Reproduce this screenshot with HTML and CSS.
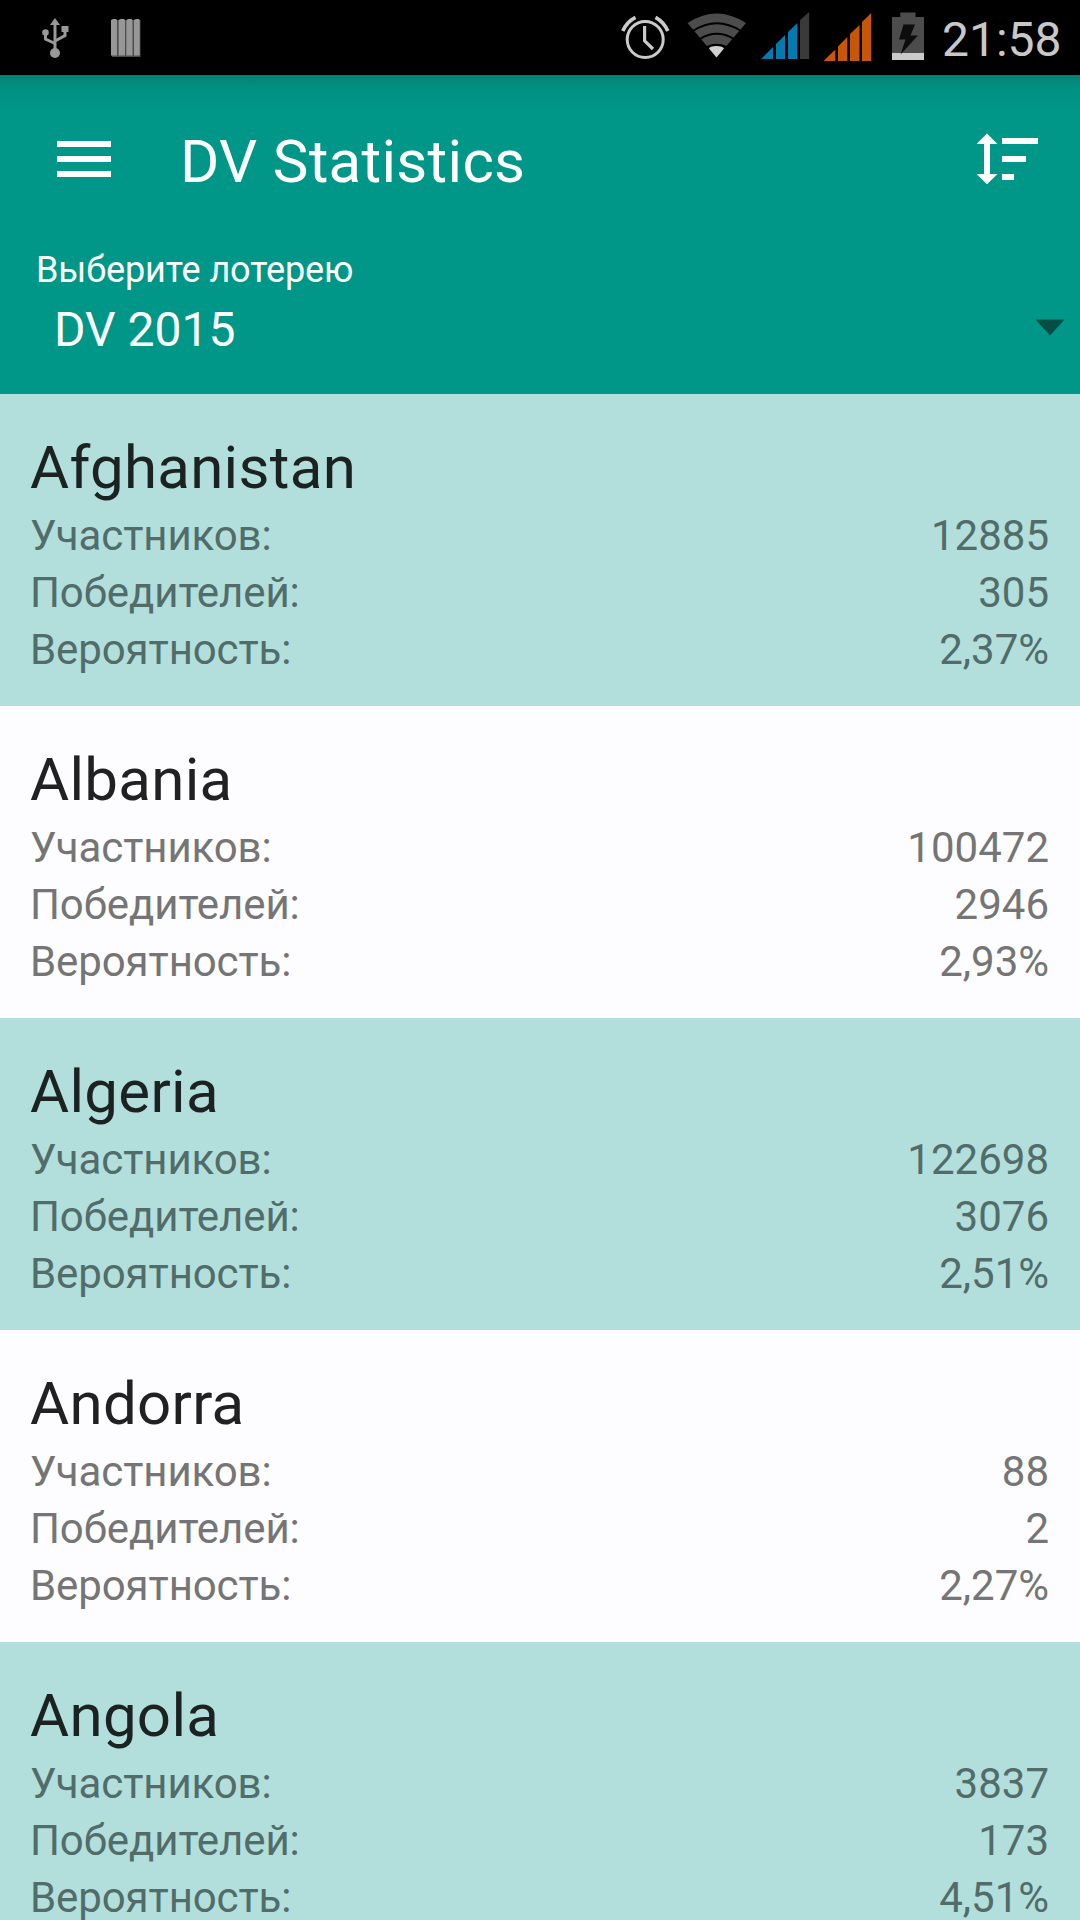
FILE: index.html
```html
<!DOCTYPE html>
<html lang="ru">
<head>
  <meta charset="utf-8">
  <title>DV Statistics</title>
  <link rel="stylesheet" href="styles.css">
</head>
<body>
  <div class="status">
    <svg class="usb" width="30" height="75" viewBox="40 0 30 75">
      <g fill="none" stroke="#999" stroke-width="3">
        <path d="M55 24V50"/>
        <path d="M45.5 33V39L55 43.500"/>
        <path d="M65 30V35.500L55 41"/>
      </g>
      <g fill="#999">
        <path d="M55 18L60 25H50Z"/>
        <circle cx="45.500" cy="32.500" r="3.300"/>
        <path d="M61.500 26H68.500V32H61.500Z"/>
        <circle cx="55" cy="53" r="5"/>
      </g>
    </svg>
    <svg class="bars" width="30" height="75" viewBox="111 0 30 75">
      <path fill="#4c4c4c" d="M112 20H140.500V57H112Z"/>
      <path fill="#979797" d="M111 20L113 19H116L117 20V55.500H111ZM118.600 20L120.600 19H124L125 20V55.500H118.600ZM126.300 20L128.300 19H131.500L132.500 20V55.500H126.300ZM134 20L136 19H139L139.700 20V55.500H134Z"/>
    </svg>
    <div class="space"></div>
    <svg class="alarm" width="50" height="75" viewBox="620 0 50 75">
      <g fill="none" stroke="#cacaca">
        <circle cx="645.200" cy="39.500" r="18" stroke-width="3"/>
        <path stroke-width="3.200" d="M644.600 26V40.800L653 49"/>
        <path stroke-width="3.600" d="M622.800 31Q626.500 22 635.500 17.300M667.800 31Q664 22 655.500 17.300"/>
      </g>
    </svg>
    <svg class="wifi" width="60" height="75" viewBox="687 0 60 75">
      <path fill="#4c4c4c" d="M716.500 57.500L687.500 23Q716.500 4 746 23Z"/>
      <g fill="none" stroke="#000" stroke-width="2">
        <path d="M693 31Q716.500 15.500 741 31"/>
        <path d="M700 39Q716.500 28.500 734 39"/>
      </g>
      <path fill="#000" d="M716.500 57.500L706.500 46Q716.500 41.500 727 46Z"/>
      <path fill="#d0d0d0" d="M716.500 57.500L709 48.500Q709.500 46 716.500 46Q723 46 724 48.500Z"/>
    </svg>
    <svg class="signal" width="50" height="75" viewBox="760 0 50 75">
      <path fill="#0679ae" d="M761 59L773 47V59ZM776 44L785 35V59H776ZM788 32L797.300 23V59H788Z"/>
      <path fill="#3a3a3a" d="M800 20L809.200 12V59H800Z"/>
    </svg>
    <svg class="signal2" width="50" height="75" viewBox="823 0 50 75">
      <path fill="#c65708" d="M823.500 61L835.300 49.500V61ZM838 46.500L847.300 37V61H838ZM850 34L859.500 25V61H850ZM862 22L871.200 13V61H862Z"/>
    </svg>
    <svg class="battery" width="33" height="75" viewBox="892 0 33 75">
      <path fill="#4c4c4c" d="M892 17H900.300V12.500H915.500V17H924V53H892Z"/>
      <path fill="#cacaca" d="M892 53H924V60H892Z"/>
      <path fill="#0d0d0d" d="M903.500 24.500H915L910.500 35.500H918L900.500 54.500L905.500 39.500H899Z"/>
    </svg>
    <div class="time">21:58</div>
  </div>

  <div class="header">
    <div class="toolbar">
      <svg class="menu" width="54" height="54" viewBox="0 0 54 54">
        <path fill="#fff" d="M0 9H54V15H0ZM0 24H54V30H0ZM0 39H54V45H0Z"/>
      </svg>
      <h1>DV Statistics</h1>
      <svg class="sort" width="62" height="52" viewBox="977 133 62 52">
        <path fill="#fff" d="M987 133.500L997.500 144H990V174H997.500L987 184.300L976.500 174H984V144H976.500ZM1002 138H1038V144H1002ZM1002 156H1026V162H1002ZM1002 174H1014V180H1002Z"/>
      </svg>
    </div>
    <div class="label">Выберите лотерею</div>
    <div class="spinner">
      <span>DV 2015</span>
      <svg width="30" height="17" viewBox="0 0 30 17"><path fill="#034f46" d="M0.500 0.500H29.500L15 16.500Z"/></svg>
    </div>
  </div>

  <ul class="list">
    <li>
      <h2>Afghanistan</h2>
      <p><span>Участников:</span><span>12885</span></p>
      <p><span>Победителей:</span><span>305</span></p>
      <p><span>Вероятность:</span><span>2,37%</span></p>
    </li>
    <li>
      <h2>Albania</h2>
      <p><span>Участников:</span><span>100472</span></p>
      <p><span>Победителей:</span><span>2946</span></p>
      <p><span>Вероятность:</span><span>2,93%</span></p>
    </li>
    <li>
      <h2>Algeria</h2>
      <p><span>Участников:</span><span>122698</span></p>
      <p><span>Победителей:</span><span>3076</span></p>
      <p><span>Вероятность:</span><span>2,51%</span></p>
    </li>
    <li>
      <h2>Andorra</h2>
      <p><span>Участников:</span><span>88</span></p>
      <p><span>Победителей:</span><span>2</span></p>
      <p><span>Вероятность:</span><span>2,27%</span></p>
    </li>
    <li>
      <h2>Angola</h2>
      <p><span>Участников:</span><span>3837</span></p>
      <p><span>Победителей:</span><span>173</span></p>
      <p><span>Вероятность:</span><span>4,51%</span></p>
    </li>
  </ul>
</body>
</html>
```
FILE: styles.css
```css
*{margin: 0;padding: 0;box-sizing: border-box;}
ul{list-style: none;}
html, body{
  width: 1080px;
  height: 1920px;
  overflow: hidden;
}
body{
  background-color: #fdfdff;
  font-family: Roboto, "Noto Sans", sans-serif;
}
svg{
  display: block;
  flex-shrink: 0;
}
h1, h2{
  font-size: 60px;
  font-weight: 400;
  line-height: 71px;
  letter-spacing: 0.3px;
}

/* status bar */
.status{
  display: flex;
  height: 75px;
  padding: 0 18px 0 40px;
  background-color: #000;
}
.bars{
  margin-left: 41px;
}
.space{
  flex: 1;
}
.wifi{
  margin-left: 17px;
}
.signal, .signal2{
  margin-left: 13px;
}
.battery{
  margin-left: 19px;
}
.time{
  width: 120px;
  margin-left: 17px;
  font-size: 48px;
  line-height: 79px;
  color: #c8c8c8;
}

/* header */
.header{
  height: 319px;
  background: linear-gradient(#058073 0, #009183 14px, #009788 38px);
  color: #fff;
}
.toolbar{
  display: flex;
  align-items: center;
  height: 168px;
  padding: 0 41px 0 57px;
}
.toolbar h1{
  flex: 1;
  margin-left: 69px;
  padding-top: 4px;
}
.label{
  padding: 1px 0 0 36px;
  font-size: 36px;
  line-height: 52px;
  letter-spacing: -0.1px;
}
.spinner{
  display: flex;
  align-items: center;
  justify-content: space-between;
  height: 62px;
  padding: 0 15px 0 54px;
  font-size: 48px;
}
.spinner span{
  padding-top: 5px;
}

/* countries */
.list li{
  height: 312px;
  padding: 38px 31px 0 30px;
}
.list li:nth-child(odd){
  background-color: #b2dfdc;
}
.list h2{
  height: 74px;
  color: #212121;
}
.list p{
  display: flex;
  justify-content: space-between;
  height: 57px;
  font-size: 42px;
  line-height: 57px;
  color: #757575;
}
.list h2 + p{
  margin-top: 1px;
}
.list p span:first-child{
  letter-spacing: -0.1px;
}
.list li:nth-child(odd) h2{
  color: #1c2222;
}
.list li:nth-child(odd) p{
  color: #516c69;
}
```
